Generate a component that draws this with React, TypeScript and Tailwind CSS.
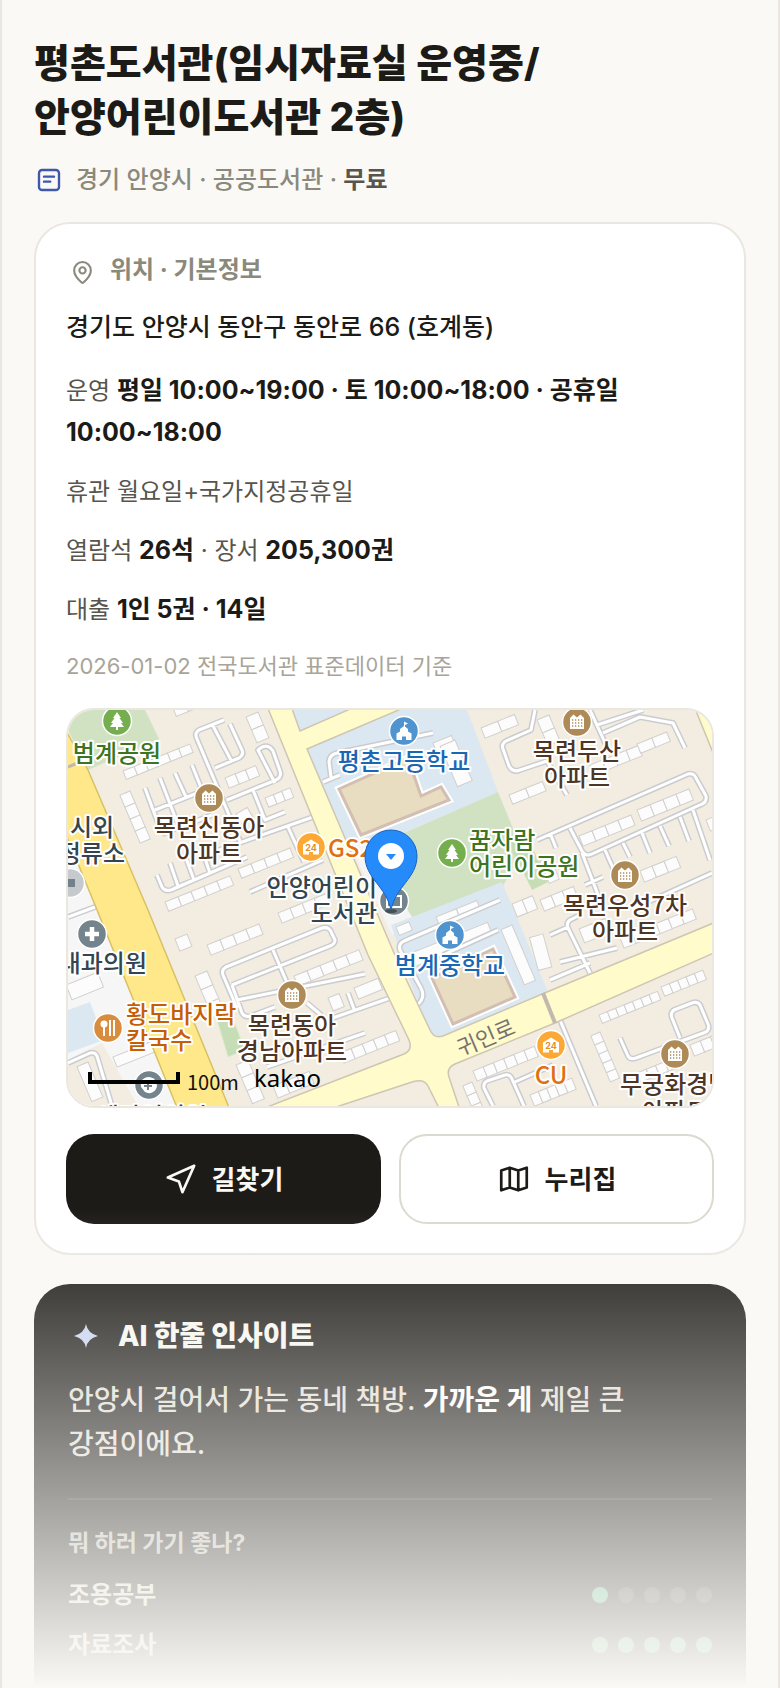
import type { ReactNode } from "react";
import { MapPin } from "lucide-react";

// ── Data ────────────────────────────────────────────────────────

const purposes = [
    { label: "조용공부", score: 1 },
    { label: "자료조사", score: 5 },
];

// Narrow streets of the map, drawn twice: grey casing, then white on top
const streets = [
    "M224 720L199 730Q194 733 197 739L240 841",
    "M215 768L239 758Q244 755 242 750L230 724",
    "M212 724L232 762",
    "M227 800L276 780Q282 777 280 771L273 751Q267 742 258 750L275 783",
    "M145 788L162 834",
    "M160 778L177 822",
    "M175 773L186 797",
    "M192 765L202 790",
    "M155 810L205 790",
    "M162 834L212 815",
    "M205 855L313 817",
    "M157 875L162 887Q165 892 171 890L247 857",
    "M170 863L178 886",
    "M186 858L194 880",
    "M202 850L210 873",
    "M253 790L265 820L285 812",
    "M250 892L323 860",
    "M288 827L304 862",
    "M237 1008L223 975Q221 970 226 967L322 928Q330 926 332 934L335 940Q335 944 330 946L232 985",
    "M273 950L288 985",
    "M237 1000L365 974",
    "M232 985L242 1013Q245 1018 251 1016L275 1007",
    "M307 1003L320 1014L323 1033",
    "M390 998L330 1019",
    "M348 993L354 1009",
    "M365 1033L267 1067",
    "M68 1063L90 1053Q95 1052 97 1056L112 1106",
    "M68 917L95 907",
    "M535 710L531 730L506 741Q501 744 503 749L509 766Q513 773 520 770L547 761L567 795",
    "M597 725L643 710",
    "M603 733L640 717L673 723L685 748",
    "M590 710L606 745",
    "M537 840L688 774Q694 773 696 778L706 796Q707 802 702 804L592 854Q585 857 582 851L570 828",
    "M582 853L600 900",
    "M605 850L617 877",
    "M623 843L630 857",
    "M642 833L650 853",
    "M660 826L669 846",
    "M680 817L689 841",
    "M693 810L710 860",
    "M550 833L556 848",
    "M712 873L637 907",
    "M585 885L603 877",
    "M550 935L568 927M580 915L570 920Q566 923 568 928L590 973",
    "M560 962L617 948",
    "M550 980L590 963",
    "M560 1020L596 1106",
    "M620 1038L628 1056Q630 1060 636 1058L706 1032Q710 1029 708 1024L700 1005Q697 1001 692 1003L674 1010Q670 1013 672 1018L680 1038",
    "M493 1106L484 1088Q483 1083 487 1081L505 1075Q510 1074 512 1079L524 1106",
    "M515 1082L553 1065",
    "M417 1005Q426 998 421 988L400 950Q398 944 404 941L500 900",
    "M443 955L498 930",
    "M323 782L340 775M331 777L329 762Q329 755 337 753L433 733",
];

// Apartment blocks: rows of n equal houses, turned by deg around their corner
const blocks = [
    { x: 123, y: 771, n: 6, w: 12, h: 9, deg: -22 },
    { x: 130, y: 791, n: 4, w: 13, h: 11, deg: 67 },
    { x: 173, y: 708, n: 3, w: 13, h: 9, deg: -22 },
    { x: 258, y: 712, n: 2, w: 14, h: 13, deg: 67 },
    { x: 225, y: 778, n: 3, w: 11, h: 11, deg: -22 },
    { x: 265, y: 798, n: 3, w: 9, h: 10, deg: -22 },
    { x: 236, y: 814, n: 1, w: 13, h: 12, deg: -30 },
    { x: 238, y: 869, n: 4, w: 14, h: 10, deg: -22 },
    { x: 165, y: 902, n: 5, w: 14, h: 10, deg: -22 },
    { x: 207, y: 945, n: 4, w: 14, h: 11, deg: -22 },
    { x: 278, y: 913, n: 4, w: 13, h: 11, deg: -22 },
    { x: 175, y: 939, n: 1, w: 13, h: 13, deg: -22 },
    { x: 207, y: 971, n: 3, w: 15, h: 13, deg: 67 },
    { x: 294, y: 976, n: 5, w: 14, h: 11, deg: -22 },
    { x: 354, y: 988, n: 1, w: 26, h: 12, deg: -22 },
    { x: 328, y: 998, n: 1, w: 12, h: 14, deg: -22 },
    { x: 340, y: 1053, n: 5, w: 12, h: 11, deg: -22 },
    { x: 248, y: 1060, n: 3, w: 14, h: 13, deg: 67 },
    { x: 273, y: 1086, n: 3, w: 13, h: 13, deg: -22 },
    { x: 66, y: 985, n: 1, w: 34, h: 16, deg: -22 },
    { x: 113, y: 1057, n: 1, w: 42, h: 11, deg: -22 },
    { x: 88, y: 1062, n: 1, w: 38, h: 12, deg: 67 },
    { x: 481, y: 728, n: 2, w: 18, h: 11, deg: -22 },
    { x: 549, y: 715, n: 2, w: 14, h: 13, deg: 67 },
    { x: 590, y: 765, n: 4, w: 13, h: 11, deg: -22 },
    { x: 637, y: 744, n: 2, w: 16, h: 10, deg: -22 },
    { x: 509, y: 795, n: 2, w: 18, h: 10, deg: -22 },
    { x: 579, y: 836, n: 4, w: 14, h: 11, deg: -22 },
    { x: 637, y: 810, n: 4, w: 14, h: 12, deg: -22 },
    { x: 640, y: 871, n: 3, w: 13, h: 12, deg: -22 },
    { x: 706, y: 820, n: 1, w: 14, h: 12, deg: -22 },
    { x: 512, y: 904, n: 2, w: 11, h: 14, deg: -22 },
    { x: 540, y: 900, n: 3, w: 12, h: 12, deg: -22 },
    { x: 550, y: 857, n: 2, w: 12, h: 11, deg: 67 },
    { x: 543, y: 934, n: 1, w: 34, h: 14, deg: 75 },
    { x: 579, y: 929, n: 2, w: 14, h: 15, deg: -22 },
    { x: 620, y: 938, n: 6, w: 13, h: 11, deg: -22 },
    { x: 599, y: 1015, n: 7, w: 9, h: 9, deg: -22 },
    { x: 661, y: 987, n: 5, w: 9, h: 10, deg: -22 },
    { x: 600, y: 1032, n: 5, w: 10, h: 10, deg: 67 },
    { x: 473, y: 1071, n: 6, w: 11, h: 11, deg: -22 },
    { x: 530, y: 1095, n: 5, w: 9, h: 12, deg: -22 },
    { x: 472, y: 1082, n: 3, w: 11, h: 10, deg: 67 },
    { x: 637, y: 1073, n: 4, w: 10, h: 10, deg: -22 },
    { x: 690, y: 1045, n: 3, w: 11, h: 12, deg: -22 },
    { x: 433, y: 743, n: 1, w: 20, h: 14, deg: -22 },
    { x: 455, y: 740, n: 1, w: 44, h: 16, deg: 67 },
    { x: 396, y: 927, n: 1, w: 14, h: 9, deg: -22 },
    { x: 436, y: 917, n: 2, w: 22, h: 10, deg: -22 },
    { x: 404, y: 956, n: 1, w: 90, h: 14, deg: -22 },
    { x: 512, y: 925, n: 1, w: 60, h: 12, deg: 67 },
];

type Anchor = "start" | "middle" | "end";
type MapLabel = { x: number; y: number; anchor: Anchor; fill: string; lines: string[] };

const mapLabels: MapLabel[] = [
    { x: 117, y: 762, anchor: "middle", fill: "#3d7420", lines: ["범계공원"] },
    { x: 209, y: 836, anchor: "middle", fill: "#4f3524", lines: ["목련신동아", "아파트"] },
    { x: 92, y: 836, anchor: "middle", fill: "#33454f", lines: ["시외"] },
    { x: 125, y: 862, anchor: "end", fill: "#33454f", lines: ["정류소"] },
    { x: 328, y: 857, anchor: "start", fill: "#e07010", lines: ["GS25"] },
    { x: 377, y: 896, anchor: "end", fill: "#33454f", lines: ["안양어린이", "도서관"] },
    { x: 404, y: 770, anchor: "middle", fill: "#1a68b5", lines: ["평촌고등학교"] },
    { x: 577, y: 760, anchor: "middle", fill: "#4f3524", lines: ["목련두산", "아파트"] },
    { x: 469, y: 849, anchor: "start", fill: "#3d7420", lines: ["꿈자람", "어린이공원"] },
    { x: 625, y: 914, anchor: "middle", fill: "#4f3524", lines: ["목련우성7차", "아파트"] },
    { x: 147, y: 972, anchor: "end", fill: "#33454f", lines: ["내과의원"] },
    { x: 126, y: 1023, anchor: "start", fill: "#c55f06", lines: ["황도바지락", "칼국수"] },
    { x: 292, y: 1034, anchor: "middle", fill: "#4f3524", lines: ["목련동아", "경남아파트"] },
    { x: 450, y: 974, anchor: "middle", fill: "#1a68b5", lines: ["범계중학교"] },
    { x: 551, y: 1084, anchor: "middle", fill: "#e07010", lines: ["CU"] },
    { x: 620, y: 1093, anchor: "start", fill: "#4f3524", lines: ["무궁화경남"] },
    { x: 642, y: 1120, anchor: "start", fill: "#4f3524", lines: ["아파트"] },
    { x: 152, y: 1125, anchor: "middle", fill: "#33454f", lines: ["세라인의원"] },
];

// ── Map pieces ──────────────────────────────────────────────────

function Spot({ x, y, fill, children }: { x: number; y: number; fill: string; children: ReactNode }) {
    return (
        <g transform={`translate(${x} ${y})`}>
            <circle r="14.5" fill={fill} stroke="#fff" strokeWidth="1.5" />
            {children}
        </g>
    );
}

function TreeSpot({ x, y }: { x: number; y: number }) {
    return (
        <Spot x={x} y={y} fill="#75ae4f">
            <path d="M0-9L4-3H2.500L6 2H4L7 6H1V9H-1V6H-7L-4 2H-6L-2.500-3H-4Z" fill="#fff" />
        </Spot>
    );
}

function HomeSpot({ x, y }: { x: number; y: number }) {
    return (
        <Spot x={x} y={y} fill="#ae8a57">
            <path d="M-7 7V-4L-3.500-7.500L0-4.500L3.500-7.500L7-4V7Z" fill="#fff" />
            <path d="M-5-2H5.500M-5 1H5.500M-5 4H5.500" stroke="#ae8a57" strokeWidth="1.300" strokeDasharray="1.300 1.700" />
        </Spot>
    );
}

function SchoolSpot({ x, y }: { x: number; y: number }) {
    return (
        <Spot x={x} y={y} fill="#4f93cf">
            <path d="M-7.500 9V2.500L-4 0.500V-2L0-5V-9.500L4-7.500L1-6V-4.500L4-2V0.500L7.500 2.500V9H2V5.500H-2V9Z" fill="#fff" />
        </Spot>
    );
}

function StoreSpot({ x, y }: { x: number; y: number }) {
    return (
        <Spot x={x} y={y} fill="#fba834">
            <path d="M-8 7.500V-2.500L0-7.500L8-2.500V7.500H2V5H-2V7.500Z" fill="#fff" />
            <text y="4" textAnchor="middle" fontSize="9" fontWeight="700" fill="#e6911c">
                24
            </text>
        </Spot>
    );
}

function LibraryMap() {
    return (
        <svg viewBox="68 710 644 396" preserveAspectRatio="xMidYMid slice" className="block h-[396px] w-full" role="img" aria-label="평촌도서관 주변 지도">
            <rect x="68" y="710" width="644" height="396" fill="#f2ece1" />

            {/* Land use */}
            <path d="M68 710H145L159 739L88 770L68 730Z" fill="#d0e2c1" />
            <path d="M68 838L95 905L177 1106H68Z" fill="#f6f6f7" />
            <path d="M68 1010L90 1002L104 1040L68 1053Z" fill="#dbe8f1" />
            <path d="M68 1060L102 1043L138 1106H68Z" fill="#f2ece1" />
            <path d="M293 710H347L300 731Z" fill="#dbe8f1" />
            <path d="M306 748L400 710H467L498 792L370 848L352 852Z" fill="#dbe8f1" />
            <path d="M350 845L385 838L414 917L392 935Z" fill="#f5f4f5" />
            <path d="M370 848L498 792L522 850L502 888L412 917Z" fill="#d0e2c1" />
            <path d="M515 832L530 842L548 882L532 890L510 845Z" fill="#c7ddb6" />
            <path d="M391 925L412 917L502 882L548 992L440 1037L428 1033Z" fill="#dbe8f1" />
            <path d="M217 1020L232 1016L245 1050L228 1057Z" fill="#c7ddb6" stroke="#deebd2" />

            {blocks.map((b) => (
                <g key={`${b.x}-${b.y}`} transform={`translate(${b.x} ${b.y}) rotate(${b.deg})`} fill="#fdfcfc" stroke="#d2d0ce">
                    {Array.from({ length: b.n }, (_, i) => (
                        <rect key={i} x={i * b.w} y="0" width={b.w} height={b.h} />
                    ))}
                </g>
            ))}

            <g fill="none" strokeLinejoin="round">
                <path d={streets.join("")} stroke="#cbccd0" strokeWidth="6" />
                <path d={streets.join("")} stroke="#fff" strokeWidth="3" />
            </g>

            {/* School yards */}
            <g strokeLinejoin="miter">
                <path d="M339 789L408 758L421 796L441 787L449 800L361 835Z" fill="#e9ddc1" stroke="#fff" strokeWidth="7" />
                <path d="M339 789L408 758L421 796L441 787L449 800L361 835Z" fill="#e9ddc1" stroke="#d3bfb2" strokeWidth="3" />
                <path d="M432 978L493 949L515 997L453 1024Z" fill="#e9ddc1" stroke="#fff" strokeWidth="7" />
                <path d="M432 978L493 949L515 997L453 1024Z" fill="#e9ddc1" stroke="#d3bfb2" strokeWidth="3" />
            </g>

            {/* Main roads */}
            <path d="M60 720L88 770L148 910L230 1110H178L95 905L60 820Z" fill="#ffe88a" stroke="#d8c164" strokeWidth="1.500" />
            <path d="M68 767L80 762" stroke="#c3b8ae" strokeWidth="3" />
            <path
                d="M267 706L368 955L409 1040Q413 1050 404 1054L262 1109H330L412 1082Q424 1078 428 1086L440 1110H460L449 1077Q446 1068 455 1064L555 1023L716 952V922L547 992L443 1036Q434 1039 430 1030L397 960L307 749L408 706H357L300 731L291 706Z"
                fill="#fffbcb"
                stroke="#cfc6b2"
                strokeWidth="1.500"
            />
            <path d="M694 706L716 760V706Z" fill="#fffbcb" stroke="#cfc6b2" strokeWidth="1.500" />
            <path d="M543 993L555 1023" stroke="#c3b8ae" strokeWidth="4" />

            {/* Places */}
            <TreeSpot x={117} y={721} />
            <TreeSpot x={452} y={853} />
            <HomeSpot x={209} y={798} />
            <HomeSpot x={577} y={722} />
            <HomeSpot x={625} y={875} />
            <HomeSpot x={292} y={995} />
            <HomeSpot x={675} y={1054} />
            <SchoolSpot x={404} y={731} />
            <SchoolSpot x={450} y={935} />
            <StoreSpot x={311} y={847} />
            <StoreSpot x={551} y={1045} />
            <Spot x={70} y={883} fill="#c6cacd">
                <rect x="-4" y="-4" width="9" height="8" fill="#71828b" />
            </Spot>
            <Spot x={92} y={934} fill="#74848c">
                <path d="M0-7V7M-7 0H7" stroke="#fff" strokeWidth="4.500" />
            </Spot>
            <Spot x={149} y={1085} fill="#74848c">
                <path d="M-8 2A8 8 0 0 1 6-5L8 0A8 8 0 0 1-4 7Z" fill="#fff" />
                <path d="M-1-3V5M-5 1H3" stroke="#74848c" strokeWidth="2" />
            </Spot>
            <Spot x={108} y={1028} fill="#d98c3d">
                <circle cx="-4" cy="-4" r="3.500" fill="#fff" />
                <path d="M-4-4V8M2-8V8M6-8V8" stroke="#fff" strokeWidth="2" />
            </Spot>
            <Spot x={394} y={901} fill="#74848c">
                <path d="M-7-5H-2L0-3L2-5H7V6H-7Z" fill="none" stroke="#fff" strokeWidth="2" />
            </Spot>

            <g fontSize="24" fontWeight="500" stroke="#fff" strokeWidth="4" strokeLinejoin="round" className="[paint-order:stroke]">
                {mapLabels.map((label) => (
                    <text key={`${label.x}-${label.y}`} y={label.y} textAnchor={label.anchor} fill={label.fill} className="font-['Noto_Sans_CJK_KR',sans-serif]">
                        {label.lines.map((line, i) => (
                            <tspan key={line} x={label.x} dy={i === 0 ? 0 : 26}>
                                {line}
                            </tspan>
                        ))}
                    </text>
                ))}
            </g>
            <text transform="translate(489 1045) rotate(-23)" textAnchor="middle" fontSize="22" fill="#77736f">
                귀인로
            </text>

            {/* Scale bar */}
            <path d="M90 1072V1082H178V1072" fill="none" stroke="#000" strokeWidth="4" />
            <text x="187" y="1090" fontSize="20" fill="#111" className="font-['Noto_Sans_CJK_KR',sans-serif]">
                100m
            </text>
            <text x="254" y="1087" fontSize="24" fill="#000" className="font-['Noto_Sans',sans-serif]">
                kakao
            </text>

            {/* Selected place */}
            <ellipse cx="391" cy="911" rx="6" ry="2" fill="#000" opacity="0.400" />
            <path d="M391 910C386 886 365 878 365 856A26 26 0 0 1 417 856C417 878 396 886 391 910Z" fill="#258bfa" stroke="#1a62c2" />
            <circle cx="391" cy="856" r="13" fill="#fff" />
            <path d="M386 854H396L391 860Z" fill="#258bfa" />
        </svg>
    );
}

// ── Page pieces ─────────────────────────────────────────────────

function Dots({ score }: { score: number }) {
    return (
        <div className="flex gap-[10px]" role="img" aria-label={`5점 중 ${score}점`}>
            {[1, 2, 3, 4, 5].map((n) => (
                <span key={n} className={`size-4 rounded-full ${n <= score ? "bg-[#52b080]" : "bg-white/15"}`} />
            ))}
        </div>
    );
}

function Strong({ children }: { children: ReactNode }) {
    return <strong className="text-[25px] leading-[40px] font-bold text-[#1c1b17]">{children}</strong>;
}

export default function App() {
    return (
        <main className="relative flex min-h-screen flex-col border-x-2 border-[#e9e7e0] bg-[#faf9f5] px-8 pt-9 font-['Inter','Noto_Sans_CJK_KR',sans-serif] text-[#1c1b17] [word-break:keep-all]">
            <h1 className="text-[39px] leading-[54px] font-extrabold">
                평촌도서관(임시자료실 운영중/
                <br />
                안양어린이도서관 2층)
            </h1>
            <p className="mt-[18px] flex items-center gap-3 text-2xl leading-9 font-medium text-[#8b887c]">
                <svg width="30" height="30" viewBox="0 0 24 24" fill="none" stroke="#3f58ab" strokeWidth="1.900" strokeLinecap="round" strokeLinejoin="round" aria-hidden="true">
                    <rect x="4" y="4" width="16" height="16" rx="2.500" />
                    <path d="M8 9.300h8M8 13.300h5" />
                </svg>
                <span>
                    경기 안양시 · 공공도서관 · <b className="font-semibold text-[#57554c]">무료</b>
                </span>
            </p>

            {/* Location card */}
            <section className="mt-6 rounded-[36px] border-2 border-[#e9e7e0] bg-white px-[30px] pt-7 pb-[29px]">
                <h2 className="flex items-center gap-3 text-2xl leading-9 font-bold text-[#8b887c]">
                    <span className="flex w-8 justify-center pt-1">
                        <MapPin size={25} strokeWidth={2} aria-hidden="true" />
                    </span>
                    위치 · 기본정보
                </h2>
                <p className="mt-[18px] text-[25px] leading-[42px] font-medium">경기도 안양시 동안구 동안로 66 (호계동)</p>
                <div className="mt-[22px] flex flex-col gap-[17px] text-2xl leading-[42px] text-[#57554c]">
                    <p>
                        운영 <Strong>평일 10:00~19:00 · 토 10:00~18:00 · 공휴일 10:00~18:00</Strong>
                    </p>
                    <p>휴관 월요일+국가지정공휴일</p>
                    <p>
                        열람석 <Strong>26석</Strong> · 장서 <Strong>205,300권</Strong>
                    </p>
                    <p>
                        대출 <Strong>1인 5권 · 14일</Strong>
                    </p>
                </div>
                <p className="mt-[18px] text-[22px] leading-[34px] text-[#a8a498]">2026-01-02 전국도서관 표준데이터 기준</p>

                <div className="mt-[25px] overflow-hidden rounded-[28px] border-2 border-[#e9e7e0]">
                    <LibraryMap />
                </div>

                <div className="mt-[26px] grid grid-cols-2 gap-[18px] text-[26px] font-bold">
                    <button type="button" className="flex h-[90px] items-center justify-center gap-[14px] rounded-[28px] bg-[#1c1b17] text-[#faf9f5]">
                        <svg width="34" height="34" viewBox="0 0 24 24" fill="none" stroke="currentColor" strokeWidth="1.900" strokeLinejoin="round" aria-hidden="true">
                            <path d="M21.300 2.700L2.700 11l7.800 2.700L13 21.300z" />
                        </svg>
                        길찾기
                    </button>
                    <a href="#homepage" className="flex h-[90px] items-center justify-center gap-[14px] rounded-[28px] border-2 border-[#dcd9cf]">
                        <svg width="34" height="34" viewBox="0 0 24 24" fill="none" stroke="currentColor" strokeWidth="1.900" strokeLinejoin="round" aria-hidden="true">
                            <path d="M3 6l6-2 6 2 6-2v14l-6 2-6-2-6 2zM9 4v14M15 6v14" />
                        </svg>
                        누리집
                    </a>
                </div>
            </section>

            {/* AI insight card */}
            <section className="mt-[29px] grow rounded-t-[36px] bg-[#1c1b17] px-[34px] pt-8 pb-4 text-[#e0ded5]">
                <h2 className="flex items-center gap-[14px] text-[28px] leading-10 font-extrabold text-[#f8f6f0]">
                    <svg width="36" height="36" viewBox="0 0 36 36" fill="#c6d2f2" aria-hidden="true">
                        <path d="M18 6Q19.500 15 30 18Q19.500 20.500 18 30Q16.500 20.500 6 18Q16.500 15 18 6Z" />
                    </svg>
                    AI 한줄 인사이트
                </h2>
                <p className="mt-[22px] text-[28px] leading-[44px] font-medium">
                    안양시 걸어서 가는 동네 책방. <b className="font-bold text-white">가까운 게</b> 제일 큰 강점이에요.
                </p>
                <div className="mt-8 border-t-2 border-white/10 pt-[26px]">
                    <h3 className="text-[23px] leading-[34px] font-bold text-[#bab8ae]">뭐 하러 가기 좋나?</h3>
                    <ul className="mt-[17px] flex flex-col gap-[14px] text-2xl leading-9 font-semibold">
                        {purposes.map((purpose) => (
                            <li key={purpose.label} className="flex items-center justify-between">
                                {purpose.label}
                                <Dots score={purpose.score} />
                            </li>
                        ))}
                    </ul>
                </div>
            </section>

            {/* Fade over the locked part */}
            <div className="pointer-events-none absolute inset-x-0 bottom-0 h-[480px] bg-linear-to-b from-[#faf9f5]/0 to-[#faf9f5]" />
        </main>
    );
}
